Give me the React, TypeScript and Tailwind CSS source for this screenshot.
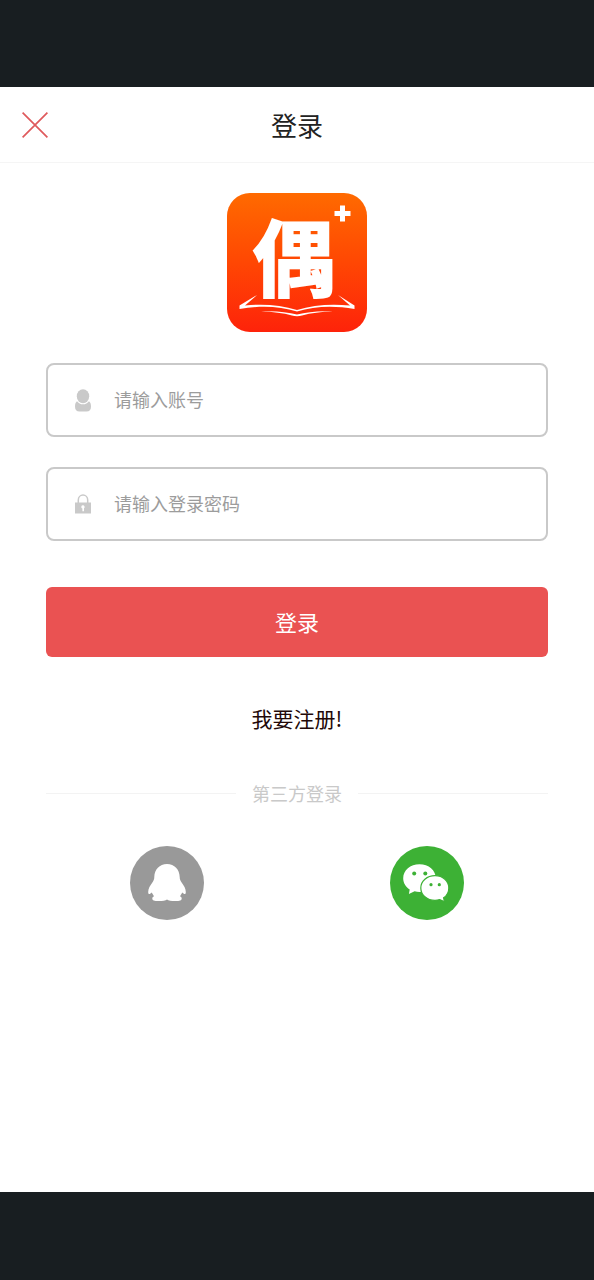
import type { ReactNode } from 'react'

const CloseIcon = () => (
  <svg viewBox="0 0 26 26" className="size-[26px]" fill="none" stroke="#df5a5c" strokeWidth="1.7" aria-hidden="true">
    <path d="M0.6 0.6 25.4 25.4M25.4 0.6 0.6 25.4" />
  </svg>
)

const Logo = () => (
  <svg viewBox="0 0 140 140" className="size-[140px]" role="img" aria-label="偶+">
    <defs>
      <linearGradient id="logo-bg" x1="0" y1="0" x2="0" y2="1">
        <stop offset="0" stopColor="#ff6a00" />
        <stop offset="0.5" stopColor="#ff4703" />
        <stop offset="1" stopColor="#fe230a" />
      </linearGradient>
    </defs>
    <rect width="140" height="139" rx="23" fill="url(#logo-bg)" />
    <text
      x="67"
      y="97"
      textAnchor="middle"
      fontSize="83"
      fontWeight="700"
      fill="#fff"
      stroke="#fff"
      strokeWidth="2"
      fontFamily="'Noto Sans CJK SC', sans-serif"
    >
      偶
    </text>
    <path d="M113 12.500h5v5.500h5.500v5h-5.500v5.500h-5v-5.500h-5.500v-5h5.500z" fill="#fff" />
    <g fill="#fff">
      <path d="M30 102 12.500 112.500v3.500c20-3.500 40-3 57.500 2.500 17.500-5.500 37.500-6 57.500-2.500v-3.500L111 102l12 10.500c-19-2-37-.5-53 4.500-16-5-34-6.500-52-4.500z" />
      <path d="M34 118.500c13-1 26 .5 36 3 10-2.500 23-4 36-3-12 .2-22 1.500-31 4-3 1-7 1-10 0-9-2.500-19-3.800-31-4z" />
    </g>
  </svg>
)

const UserIcon = () => (
  <svg viewBox="0 0 16 23" className="h-[23px] w-4" fill="#c9c9c9" aria-hidden="true">
    <ellipse cx="8" cy="7.200" rx="6.200" ry="7" />
    <path d="M2 12.200C.6 13.300 0 15 0 17.500 0 21 1.500 22.600 4.500 22.600h7c3 0 4.500-1.600 4.500-5.100 0-2.500-.6-4.200-2-5.300-1.500 2-3.500 3.100-6 3.100s-4.500-1.100-6-3.100z" />
  </svg>
)

const LockIcon = () => (
  <svg viewBox="0 0 16 20" className="h-5 w-4" aria-hidden="true">
    <path d="M3.300 9V6a4.700 5 0 0 1 9.400 0v3" fill="none" stroke="#c9c9c9" strokeWidth="1.500" />
    <path d="M0 8.500h16V19.500H0z" fill="#c9c9c9" />
    <path d="M8 11.300a1.700 1.700 0 0 1 1 3v2.900H7.400v-2.600a1.700 1.700 0 0 1 .6-3.300z" fill="#fff" />
  </svg>
)

const QqIcon = () => (
  <svg viewBox="0 0 74 74" className="size-[74px]" aria-hidden="true">
    <circle cx="37" cy="37" r="37" fill="#999" />
    <path
      d="M37 18C29.500 18 24.500 23.500 24.300 31c0 2-.5 3.300-1.600 5C20 39.800 18.200 42.500 18.200 46c0 2.300 1 2.500 2.300 1.400l1.200-1 2.300 3.800c-1.200.5-1.700 1.200-1.700 2.200 0 2 2 2.600 6.200 2.600 4.300 0 7-.4 8.500-1.500 1.500 1.100 4.200 1.500 8.500 1.500 4.200 0 6.200-.6 6.200-2.600 0-1-.5-1.700-1.700-2.200l2.300-3.800 1.200 1c1.300 1.100 2.300.9 2.300-1.400 0-3.500-1.800-6.200-4.500-10-1.100-1.700-1.600-3-1.600-5C49.500 23.500 44.500 18 37 18z"
      fill="#fff"
    />
  </svg>
)

const WechatIcon = () => (
  <svg viewBox="0 0 74 74" className="size-[74px]" aria-hidden="true">
    <circle cx="37" cy="37" r="37" fill="#3db135" />
    <path d="M29.500 18.300c-9.200 0-16.300 6-16.300 13.900 0 4.600 2.400 8.600 6.500 11.200l-.8 4.500 5.700-2.600c1.500.4 3.200.6 4.900.6 9.200 0 16.300-6 16.300-13.700s-7.100-13.900-16.300-13.900z" fill="#fff" />
    <path
      d="M45 29.600c-8 0-14.200 5.500-14.200 12.300s6.200 12.500 14.200 12.500c1.700 0 3.300-.3 4.800-.8l4.700 2.200-.9-4c3.300-2.200 5.200-5.800 5.200-9.900 0-6.800-5.800-12.300-13.800-12.300z"
      fill="#fff"
      stroke="#3db135"
      strokeWidth="1.200"
    />
    <g fill="#3db135">
      <circle cx="24.200" cy="27.500" r="2" />
      <circle cx="35.300" cy="27.500" r="2" />
      <circle cx="41" cy="38.700" r="1.600" />
      <circle cx="49.300" cy="38.700" r="1.600" />
    </g>
  </svg>
)

type FieldProps = {
  id: string
  type: string
  label: string
  icon: ReactNode
}

const Field = ({ id, type, label, icon }: FieldProps) => (
  <div className="flex h-[74px] items-center rounded-lg border-2 border-[#c9c9c9] pl-[27px]">
    <label htmlFor={id} aria-label={label}>
      {icon}
    </label>
    <input
      id={id}
      type={type}
      placeholder={label}
      className="ml-[23px] h-full min-w-0 flex-1 pb-0.5 text-lg text-gray-800 outline-none placeholder:text-[#9c9c9c]"
    />
  </div>
)

const App = () => {
  return (
    <div className="flex min-h-screen flex-col bg-white font-['Noto_Sans_CJK_SC',sans-serif]">
      <div className="h-[87px] bg-[#181e21]" />

      <header className="grid h-[76px] grid-cols-[1fr_auto_1fr] items-center border-b border-[#f5f5f5] px-[22px]">
        <button type="button" aria-label="关闭" className="justify-self-start">
          <CloseIcon />
        </button>
        <h1 className="text-[26px] leading-8 text-[#222]">登录</h1>
      </header>

      <main className="flex-1">
        <div className="flex justify-center pt-[30px]">
          <Logo />
        </div>

        <form className="px-[46px] pt-[30px]" onSubmit={(e) => e.preventDefault()}>
          <div className="flex flex-col gap-[30px]">
            <Field id="account" type="text" label="请输入账号" icon={<UserIcon />} />
            <Field id="password" type="password" label="请输入登录密码" icon={<LockIcon />} />
          </div>
          <button type="submit" className="mt-[46px] h-[70px] w-full rounded-md bg-[#ea5252] pb-0.5 text-[22px] text-white">
            登录
          </button>
        </form>

        <div className="mt-[45px] flex justify-center">
          <a href="#register" className="text-[21px] leading-8 text-[#220808]">
            我要注册!
          </a>
        </div>

        <div className="mx-[46px] mt-[45px] flex items-center gap-4">
          <div className="h-px flex-1 bg-[#f3f3f3]" />
          <h2 className="text-lg leading-7 text-[#c9c9c9]">第三方登录</h2>
          <div className="h-px flex-1 bg-[#f3f3f3]" />
        </div>

        <div className="mt-[39px] grid grid-cols-2 justify-items-center px-[37px] pb-10">
          <button type="button" aria-label="QQ登录">
            <QqIcon />
          </button>
          <button type="button" aria-label="微信登录">
            <WechatIcon />
          </button>
        </div>
      </main>

      <div className="h-[88px] bg-[#181e21]" />
    </div>
  )
}

export default App
